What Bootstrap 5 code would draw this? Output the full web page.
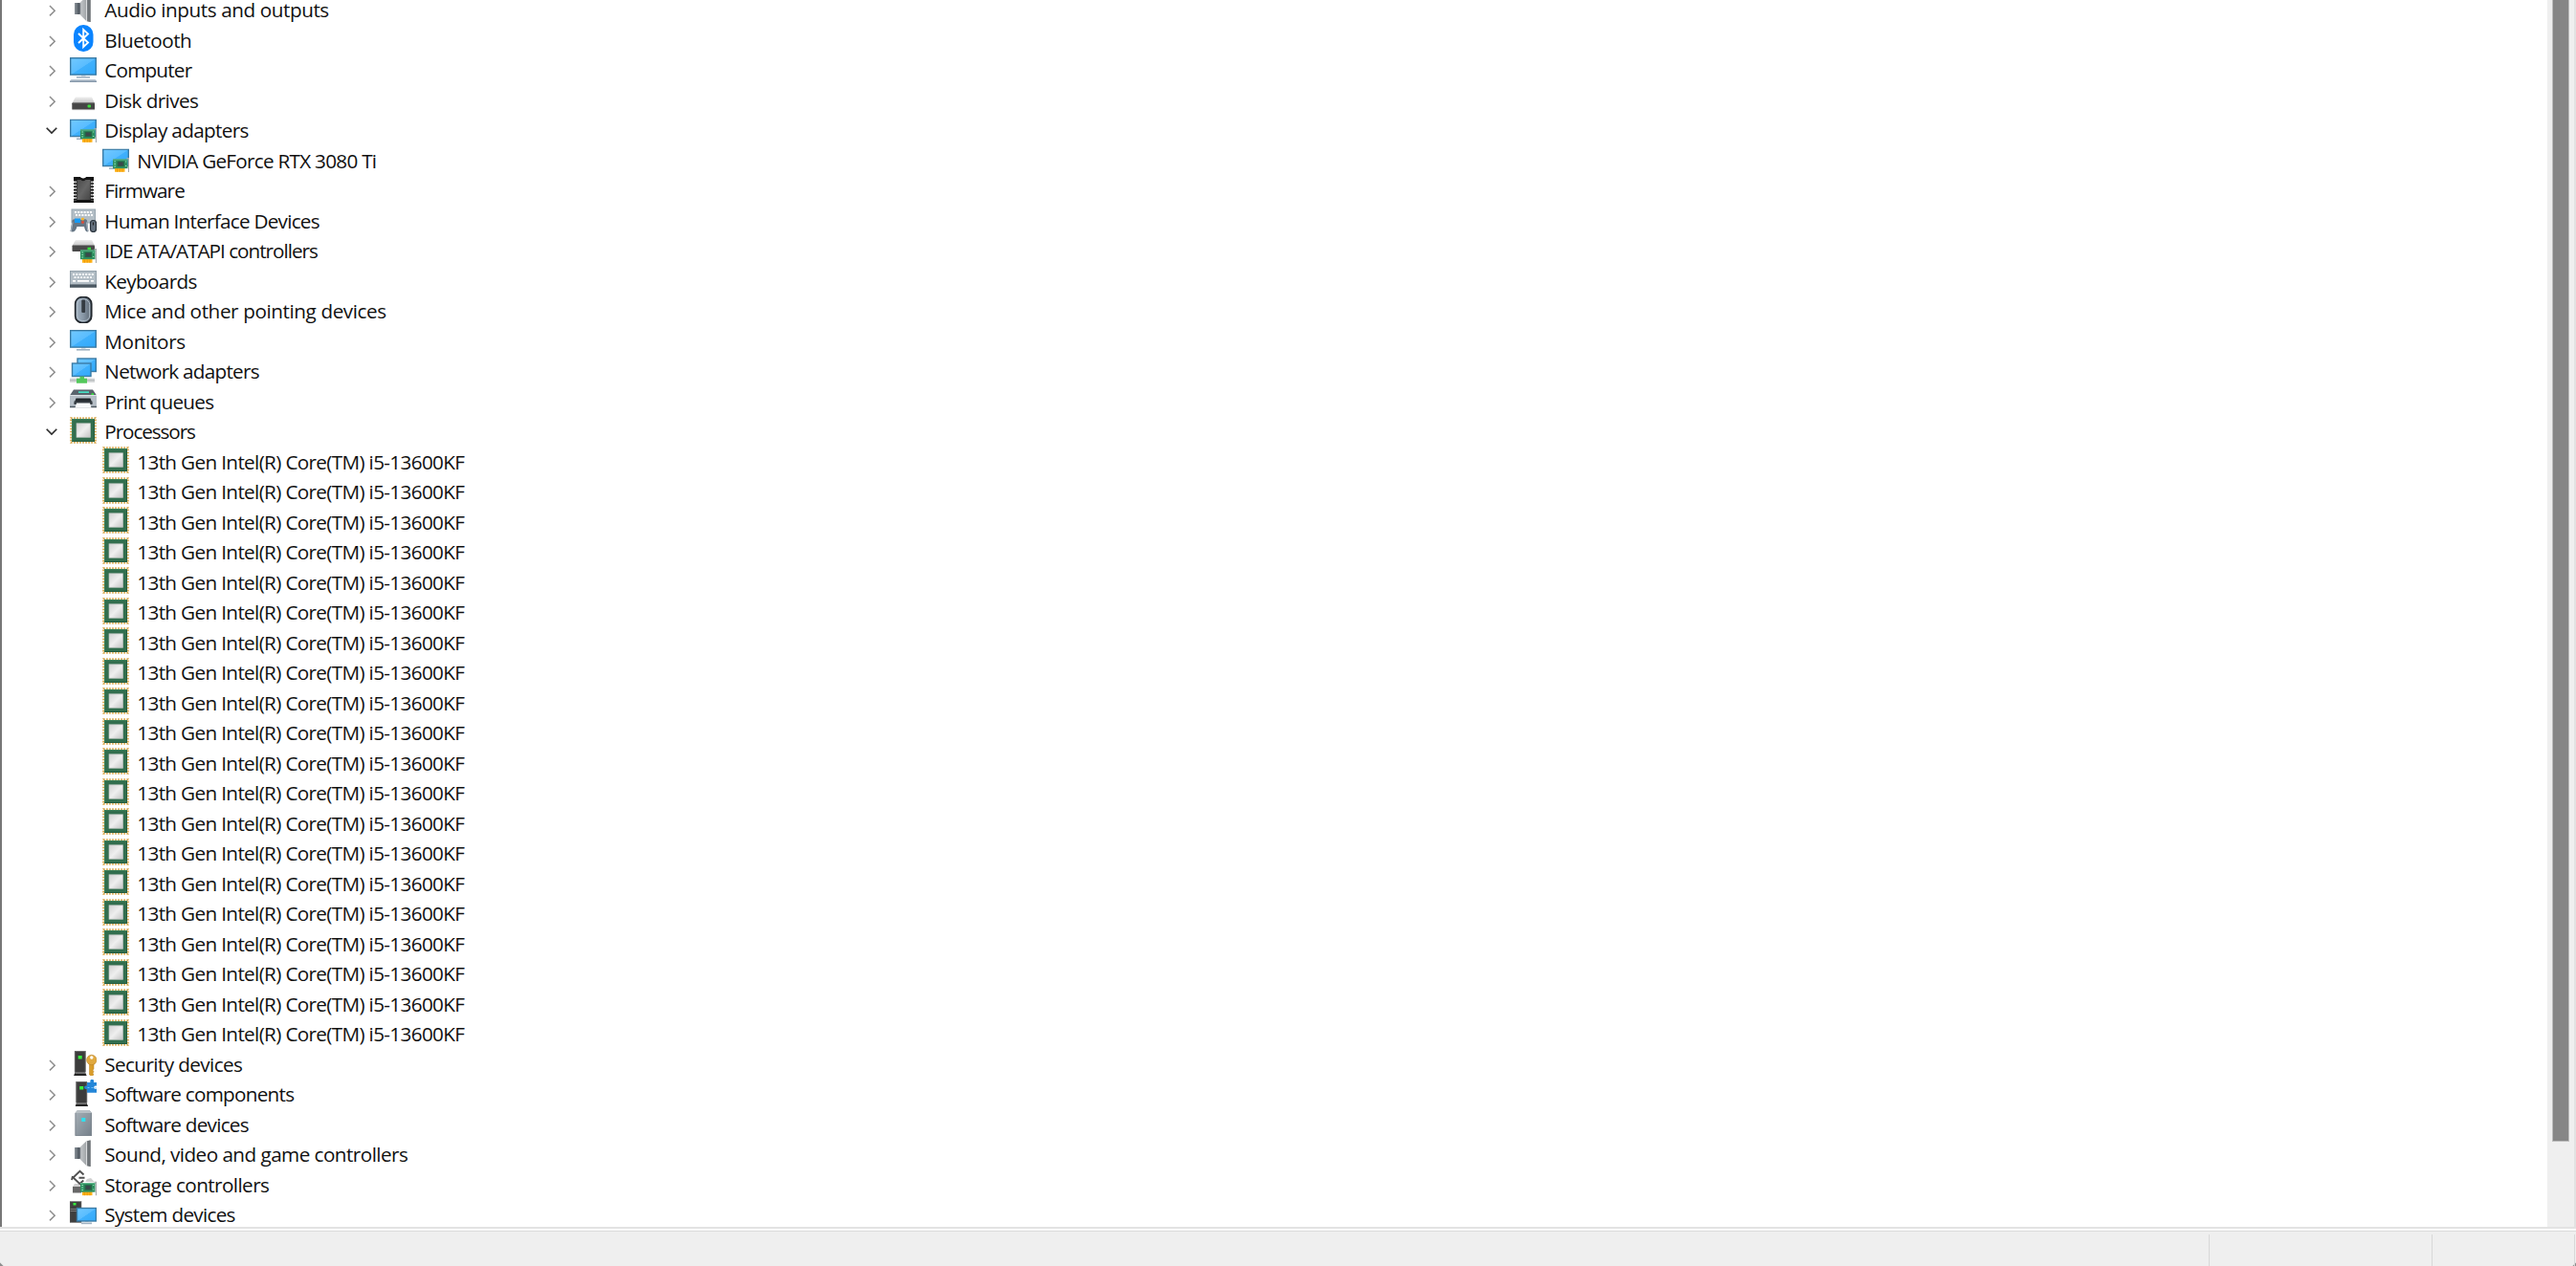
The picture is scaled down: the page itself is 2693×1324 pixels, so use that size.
<!DOCTYPE html>
<html lang="en">
<head>
<meta charset="utf-8">
<title>Device Manager</title>
<meta name="viewport" content="width=device-width, initial-scale=1">
<link href="https://cdn.jsdelivr.net/npm/bootstrap@5.3.0/dist/css/bootstrap.min.css" rel="stylesheet">
<style>
  body { font-family: "Open Sans", "Noto Sans", sans-serif; font-size: 20.7px; color: #111; background: #efefef; height: 1324px; }
  .pane { height: 1283px; border-left: 2px solid #777; background: #fff; }
  .tree { margin-top: -4.5px; }
  .tree-row { height: 31.5px; padding-left: 44.500px; }
  .tree-row.child { padding-left: 105px; }
  .chev { width: 14px; height: 14px; margin-right: 12.500px; }
  .dev-icon { width: 28px; height: 28px; margin-top: -5px; margin-right: 8.300px; overflow: visible; }
  .label { line-height: 22px; white-space: nowrap; margin-top: -2px; }
  .scroll-track { width: 28px; padding-left: 5px; background: #efefef; }
  .scroll-thumb { width: 18px; height: 1194px; background: #868686; border: 1px solid #bdbdbd; border-top: 0; }
  .edge { width: 2px; background: #e2e2e2; }
  .split { height: 5px; border-top: 2px solid #e3e3e3; border-bottom: 1px solid #dcdcdc; background: #fbfbfb; }
  .statusbar { height: 36px; padding-top: 3px; background-image: linear-gradient(45deg, #8d8d8d 2px, transparent 3px), linear-gradient(315deg, #8d8d8d 2px, transparent 3px); }
  .cell { border-right: 1px solid #d8d8d8; }
  .cell-b { width: 233px; }
  .cell-c { width: 149px; margin-right: 1px; }
</style>
<script src="https://cdn.jsdelivr.net/npm/bootstrap@5.3.0/dist/js/bootstrap.bundle.min.js"></script>
</head>
<body class="d-flex flex-column overflow-hidden m-0">

<svg width="0" height="0" class="position-absolute" aria-hidden="true">
  <defs>
    <linearGradient id="gScreen" x1="0" y1="0" x2="1" y2="1"><stop offset="0" stop-color="#72c9ff"/><stop offset=".5" stop-color="#5abdff"/><stop offset=".52" stop-color="#40b0fc"/><stop offset="1" stop-color="#2fa9fb"/></linearGradient>
    <linearGradient id="gCone" x1="0" x2="1"><stop offset="0" stop-color="#c9cccf"/><stop offset=".6" stop-color="#a2a6a9"/><stop offset=".75" stop-color="#dadcde"/><stop offset="1" stop-color="#6b6f73"/></linearGradient>
    <linearGradient id="gCyl" x1="0" x2="1"><stop offset="0" stop-color="#8d949b"/><stop offset="1" stop-color="#3b444d"/></linearGradient>
    <linearGradient id="gDisk" x1="0" y1="0" x2="0" y2="1"><stop offset="0" stop-color="#efefef"/><stop offset="1" stop-color="#c4c4c4"/></linearGradient>
    <linearGradient id="gSteel" x1="0" y1="0" x2="1" y2="1"><stop offset="0" stop-color="#a7b0b7"/><stop offset="1" stop-color="#75808a"/></linearGradient>
    <linearGradient id="gDie" x1="0" y1="0" x2="1" y2="1"><stop offset="0" stop-color="#d2d2d2"/><stop offset=".5" stop-color="#efefef"/><stop offset="1" stop-color="#c4c4c4"/></linearGradient>
    <linearGradient id="gChip" x1="0" y1="0" x2="1" y2="1"><stop offset="0" stop-color="#4b4b4b"/><stop offset=".5" stop-color="#666"/><stop offset="1" stop-color="#444"/></linearGradient>
    <linearGradient id="gMouse" x1="0" x2="1"><stop offset="0" stop-color="#a5b5c5"/><stop offset=".5" stop-color="#8796a5"/><stop offset="1" stop-color="#56616d"/></linearGradient>

    <symbol id="i-card" viewBox="0 0 18 15">
      <rect x="2.500" y="10.500" width="10.500" height="4.300" fill="#ffb21a"/>
      <path d="M5 11.500v3.300M7.700 11.500v3.300M10.400 11.500v3.300" stroke="#e59200" stroke-width=".7"/>
      <rect x=".5" y="1.500" width="15.500" height="9.700" fill="#2f8f60"/><path d="M.5 2h15.500" stroke="#62b98d"/>
      <rect x="5" y="3.700" width="7.500" height="5.500" fill="#256746"/><rect x="6.300" y="4.600" width="4.700" height="3.700" fill="#3b474c"/>
      <path d="M1.800 4h1.700M1.800 6.500h1.700M1.800 9h1.700M13.500 4h1.300M13.500 8.500h1.300" stroke="#8ae0b0" stroke-width="1"/>
      <path d="M15 .7h2V15" fill="none" stroke="#a5a9ab" stroke-width="1.200"/>
    </symbol>
    <symbol id="i-audio" viewBox="0 0 28 28">
      <rect x="5" y="8" width="6" height="12" fill="url(#gCyl)"/>
      <path d="M10 8.2 17.5 1.3 21.5.6V28l-4-.8L10 19.8Z" fill="url(#gCone)"/>
      <path d="M18 1.2 21.6.5V28l-3.6-.7Z" fill="#6f7478"/><path d="M17.6 1.6V27" stroke="#dfe1e3" stroke-width="1"/>
      <path d="M10.700 8.200v11.600" stroke="#555d65" stroke-width="1"/>
    </symbol>
    <symbol id="i-bt" viewBox="0 0 28 28">
      <rect x="4" y="0" width="20.5" height="28" rx="10" fill="#0a84ff"/>
      <path d="M9 9 19 18.6 14.2 23V5L19 9.4 9 19" fill="none" stroke="#fff" stroke-width="1.9"/>
    </symbol>
    <symbol id="i-screen" viewBox="0 0 28 22">
      <rect x="7" y="20" width="14" height="1.6" fill="#9fb1c1"/><rect x="12" y="18" width="4.5" height="2" fill="#d5dde4"/>
      <rect x=".7" y=".7" width="26.6" height="17.4" fill="url(#gScreen)" stroke="#3a7ba5" stroke-width="1.4"/>
    </symbol>
    <symbol id="i-computer" viewBox="0 0 28 28">
      <use href="#i-screen" x="0" y="2" width="28" height="22"/>
      <path d="M1.5 25.2h25l1.5 1.300v1.600H0v-1.600Z" fill="#a3b2c1"/>
      <path d="M0 27.600h28" stroke="#8496a8" stroke-width="1"/>
    </symbol>
    <symbol id="i-disk" viewBox="0 0 28 28">
      <path d="M6 12.500h17l3 6.500H2.300Z" fill="url(#gDisk)"/>
      <rect x="2.300" y="18.500" width="23.700" height="7" rx=".8" fill="#454545"/><path d="M2.500 25.600h23.500" stroke="#999" stroke-width="1"/>
      <path d="M3 18.700h22.500" stroke="#777" stroke-width=".8"/>
      <rect x="18.500" y="20.500" width="3.500" height="3" rx="1" fill="#3ddc3d"/>
    </symbol>
    <symbol id="i-display" viewBox="0 0 28 28">
      <use href="#i-screen" x="0" y="3.500" width="28" height="22"/>
      <use href="#i-card" x="10.500" y="13" width="18" height="15"/>
    </symbol>
    <symbol id="i-firmware" viewBox="0 0 28 28">
      <path d="M4 1h7.500v1h5V1H25v27H4Z" fill="#141414"/>
      <path d="M7.500 4h4q2.500 2.500 5 0h5v21h-14Z" fill="url(#gChip)"/>
      <path d="M11.500 1q2.500 3 5 0" fill="#fff"/>
      <path d="M4 5.500v20M25 5.500v20" stroke="#fff" stroke-width="3" stroke-dasharray="1.700 1.600"/>
      <path d="M6.300 5.500v20M22.700 5.500v20" stroke="#c9c9c9" stroke-width="1.600" stroke-dasharray="1.700 1.600"/>
    </symbol>
    <symbol id="i-keys" viewBox="0 0 28 18">
      <rect x=".5" y=".5" width="27" height="14.500" fill="#b3bec6" stroke="#93a1ab"/>
      <path d="M3 4h22M4.500 7.200h20" stroke="#fff" stroke-width="1.800" stroke-dasharray="2 1.300"/>
      <path d="M3 10.800h3M22 10.800h3M8 10.800h12" stroke="#fff" stroke-width="1.800"/>
      <rect y="14.500" width="28" height="3.300" fill="#4c5963"/>
    </symbol>
    <symbol id="i-keyboard" viewBox="0 0 28 28"><use href="#i-keys" x="0" y="5" width="28" height="18"/></symbol>
    <symbol id="i-hid" viewBox="0 0 28 28">
      <rect x="2" y="4" width="24.500" height="14" fill="#b3bec6" stroke="#98a6b0"/>
      <path d="M5 7h19M6 10h18" stroke="#fff" stroke-width="1.800" stroke-dasharray="2 1.200"/>
      <path d="M2.500 15.500c1-1.500 2.500-1.500 4-.7h7c2-1 3.700-.7 4.500.7l1.500 11.500c-2.300 1.300-3.500-.5-4.500-5h-7.500c-1 4.500-3.500 6.500-7 5Z" fill="#667685"/>
      <path d="M1.200 27 3 17.500M18.700 26.500 17.500 17.500" stroke="#a9b5c0" stroke-width="1.100"/>
      <rect x="5" y="13.500" width="6" height="4.500" fill="#179af5"/>
      <circle cx="13.500" cy="14" r="1.600" fill="#f4b52c"/><circle cx="13.500" cy="17.500" r="1.400" fill="#e34b36"/>
      <rect x="21.500" y="15.500" width="6" height="12" rx="2.900" fill="#65727f" stroke="#28313a" stroke-width="1.200"/>
      <path d="M24.500 17.500v3" stroke="#222" stroke-width="1.200"/>
    </symbol>
    <symbol id="i-ide" viewBox="0 0 28 28">
      <path d="M6 4h17l3 6H2.500Z" fill="url(#gDisk)"/>
      <rect x="2.500" y="9.500" width="23.500" height="6.500" rx=".8" fill="#4a4a4a"/>
      <use href="#i-card" x="10.500" y="13" width="18" height="15"/>
      <rect x="18.500" y="11.700" width="3.500" height="2.500" fill="#35e03b"/>
    </symbol>
    <symbol id="i-mouse" viewBox="0 0 28 28">
      <rect x="5.700" y=".7" width="17" height="26.800" rx="7" fill="url(#gMouse)" stroke="#20262c" stroke-width="1.700"/>
      <rect x="7.700" y="3" width="13" height="22.500" rx="5.500" fill="none" stroke="#b7c4d0" stroke-width=".9"/>
      <rect x="12.300" y="3.500" width="3.800" height="13.500" rx="1" fill="#343b42"/>
    </symbol>
    <symbol id="i-monitor" viewBox="0 0 28 28"><use href="#i-screen" x="0" y="4" width="28" height="22"/></symbol>
    <symbol id="i-network" viewBox="0 0 28 28">
      <rect x="8" y="2" width="19.300" height="13.500" fill="url(#gScreen)" stroke="#3a7ba5" stroke-width="1.400"/>
      <rect x="2.500" y="7" width="19.500" height="13.500" fill="url(#gScreen)" stroke="#3a7ba5" stroke-width="1.400"/>
      <path d="M0 22.500h26v4.500H0Z" fill="#d7d9db"/><path d="M0 24.700h26" stroke="#aeb3b6" stroke-width="1"/>
      <path d="M10.500 20.800h4.500v2h3v5H7v-5h3.500Z" fill="#53c85b"/>
    </symbol>
    <symbol id="i-print" viewBox="0 0 28 28">
      <path d="M4 3.500h20l4 6H0Z" fill="#59636c"/>
      <rect y="9" width="28" height="12.500" fill="#b6bfc7"/><path d="M0 9.500h28" stroke="#dce1e5"/>
      <path d="M0 21.500h28" stroke="#4e5962" stroke-width="1.600"/>
      <rect x="9" y="5.300" width="11" height="1.700" fill="#47dfc4"/><rect x="22.500" y="7.300" width="2.500" height="1.700" fill="#38e33d"/>
      <path d="M6.500 12.500h15l2 5.500h-19Z" fill="#22282d"/><path d="M4.500 15.500h19v3.500h-19Z" fill="#363d43"/>
      <path d="M7 17.500h14l1.500 5h-17Z" fill="#f8f9fa"/>
    </symbol>
    <symbol id="i-cpu" viewBox="0 0 28 28">
      <rect x="1.100" y="1.100" width="25.800" height="25.800" fill="none" stroke="#d6a548" stroke-width="1.800" stroke-dasharray="1.600 1.433"/>
      <rect x="2" y="2" width="24" height="24" fill="#326e4e"/><path d="M2.500 26V2.500H26" fill="none" stroke="#3d8059"/><path d="M2.500 25.500h23V3" fill="none" stroke="#245c3f"/>
      <rect x="7" y="6.800" width="14.500" height="14.500" fill="url(#gDie)" stroke="#b9c2bc" stroke-width=".7"/>
    </symbol>
    <symbol id="i-tower" viewBox="0 0 14 27">
      <path d="M1 0h11.500v22.500H1Z" fill="#3c3c3c"/><path d="M1.300 22V.5h11V22" fill="none" stroke="#777" stroke-width=".8"/>
      <path d="M1.500 22.500h10.500l1.800 3.800H0Z" fill="#242424"/><path d="M1.500 23.300H12" stroke="#aaa" stroke-width=".7"/>
      <rect x="4.700" y="5" width="4" height="3.500" fill="#37f03d"/>
    </symbol>
    <symbol id="i-security" viewBox="0 0 28 28">
      <use href="#i-tower" x="4" y="2" width="14" height="27"/>
      <path d="M20.500 15.500V27l2 1.500 2.500-1.500-1-1.800 1-1.500-1-1.500 1-1.500v-5.500Z" fill="#d99d2b" stroke="#b87c16" stroke-width=".5"/>
      <circle cx="22.800" cy="11.500" r="5.200" fill="#e0a93f" stroke="#b98022" stroke-width=".6"/><circle cx="22.800" cy="9" r="1.700" fill="#fff"/>
    </symbol>
    <symbol id="i-softcomp" viewBox="0 0 28 28">
      <use href="#i-tower" x="5.500" y="2" width="14" height="27"/>
      <path d="M18 3h3.500c-.8-2 .3-3.200 1.700-3.200S25.700 1 25 3h3.300v4c-2-1-3 0-3 1.200s1 2.200 3 1.300v4.200H18v-4c-2 .7-2.800-.3-2.800-1.500s1-2.200 2.800-1.300Z" fill="#2386d8"/>
      <path d="M18.500 8.500h9" stroke="#72c0fa" stroke-width="1.200" stroke-dasharray="2 2"/>
    </symbol>
    <symbol id="i-softdev" viewBox="0 0 28 28">
      <path d="M5.500 4 8 1h12.500L23 4v24H5.500Z" fill="url(#gSteel)"/><path d="M5.500 4 8 1h12.500L23 4Z" fill="#b9c0c5"/>
      <path d="M6 4v23.500h16.500V4" fill="none" stroke="#7d878f" stroke-width=".8"/>
      <rect x="12.300" y="9" width="4" height="4" fill="#2fe0ee"/>
    </symbol>
    <symbol id="i-storage" viewBox="0 0 28 28">
      <path d="M3 18h9v6.500H3Z" fill="#686868"/><path d="M3 18l2-3h8l2 3Z" fill="#cfcfcf"/>
      <path d="m16 13 2-3 4-1 4 4.500Z" fill="#d0d0d0"/>
      <path d="M14.500 5.500 10.500 1.700 3.500 8.500l6.800 6.500 4-3.500M9.500 8.700h6M3 7l-1 4" fill="none" stroke="#505050" stroke-width="1.900"/>
      <use href="#i-card" x="10.500" y="12.500" width="18" height="15"/>
    </symbol>
    <symbol id="i-system" viewBox="0 0 28 28">
      <rect x="0" y="1.500" width="12" height="22" fill="#3f3f3f" stroke="#777" stroke-width=".6"/><path d="M.5 9.500h11M.5 11.500h11" stroke="#8a8a8a" stroke-width=".8"/>
      <rect x="3.500" y="3" width="3" height="2.500" fill="#37f03d"/>
      <rect x="12" y="23.500" width="11" height="1.700" fill="#9fb1c1"/><rect x="16" y="21.500" width="3.500" height="2" fill="#d5dde4"/>
      <rect x="7.500" y="8.500" width="20" height="13.500" fill="url(#gScreen)" stroke="#3a7ba5" stroke-width="1.400"/>
    </symbol>
    <symbol id="c-right" viewBox="0 0 14 14"><path d="M5 2 10.200 7.200 5 12.400" fill="none" stroke="#8f8f8f" stroke-width="1.500"/></symbol>
    <symbol id="c-down" viewBox="0 0 14 14"><path d="M1.700 3.800 7 9.100l5.300-5.300" fill="none" stroke="#2b2b2b" stroke-width="1.600"/></symbol>
  </defs>
</svg>

<main class="pane d-flex flex-shrink-0 overflow-hidden">
  <div class="tree flex-grow-1" id="tree" role="tree"></div>
  <div class="scroll-track"><div class="scroll-thumb"></div></div>
  <div class="edge"></div>
</main>
<div class="split flex-shrink-0"></div>
<footer class="statusbar d-flex flex-shrink-0">
  <div class="cell flex-grow-1"></div>
  <div class="cell cell-b"></div>
  <div class="cell cell-c"></div>
</footer>

<script>
  // [icon, label, label width in px, kind]: kind is "open", "child" or closed when left out
  const cpu = ["cpu", "13th Gen Intel(R) Core(TM) i5-13600KF", 342, "child"];
  const devices = [
    ["audio", "Audio inputs and outputs", 234.5],
    ["bt", "Bluetooth", 91],
    ["computer", "Computer", 91],
    ["disk", "Disk drives", 98],
    ["display", "Display adapters", 150.5, "open"],
    ["display", "NVIDIA GeForce RTX 3080 Ti", 250, "child"],
    ["firmware", "Firmware", 83.5],
    ["hid", "Human Interface Devices", 224.5],
    ["ide", "IDE ATA/ATAPI controllers", 222.5],
    ["keyboard", "Keyboards", 96.5],
    ["mouse", "Mice and other pointing devices", 294.5],
    ["monitor", "Monitors", 84.5],
    ["network", "Network adapters", 161.5],
    ["print", "Print queues", 114],
    ["cpu", "Processors", 94.5, "open"],
    ...Array(20).fill(cpu),
    ["security", "Security devices", 144],
    ["softcomp", "Software components", 198],
    ["softdev", "Software devices", 150.5],
    ["audio", "Sound, video and game controllers", 317],
    ["storage", "Storage controllers", 172],
    ["system", "System devices", 136.5]
  ];
  const tree = document.getElementById("tree");
  tree.innerHTML = devices.map(([icon, label, w, kind]) => `
    <div class="tree-row d-flex align-items-center ${kind === "child" ? "child" : ""}" role="treeitem">
      ${kind === "child" ? "" : `<svg class="chev flex-shrink-0"><use href="#c-${kind === "open" ? "down" : "right"}"/></svg>`}
      <svg class="dev-icon flex-shrink-0"><use href="#i-${icon}"/></svg>
      <span class="label" data-w="${w}">${label}</span>
    </div>`).join("");
  // Spread each label over its set width
  tree.querySelectorAll(".label").forEach(el => {
    const gap = (el.dataset.w - el.getBoundingClientRect().width) / el.textContent.length;
    el.style.letterSpacing = gap.toFixed(3) + "px";
  });
</script>
</body>
</html>
